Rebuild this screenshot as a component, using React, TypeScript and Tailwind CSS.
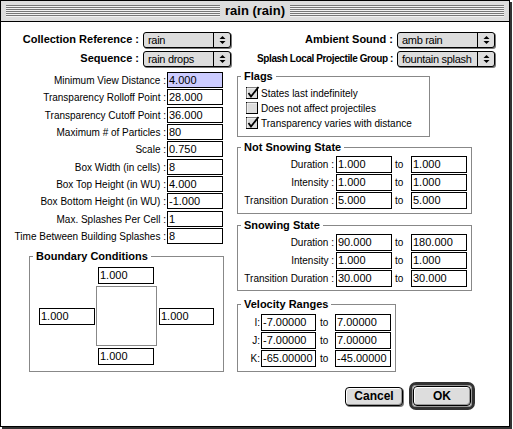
import React from "react";

type FieldProps = { value: string; w?: string; hl?: boolean };

function Field({ value, w = "w-[56px]", hl = false }: FieldProps) {
  return (
    <div
      className={`${w} h-[17px] shrink-0 border border-black ${hl ? "bg-[#ccccff]" : "bg-white"} pl-[1px] text-[11px] leading-[15px] whitespace-nowrap overflow-hidden`}
    >
      {value}
    </div>
  );
}

function SmallField({ value, hl = false }: FieldProps) {
  return (
    <div
      className={`w-[56px] h-[16px] shrink-0 border border-black ${hl ? "bg-[#ccccff]" : "bg-white"} pl-[1px] text-[11px] leading-[14px] whitespace-nowrap overflow-hidden`}
    >
      {value}
    </div>
  );
}

function Popup({ value, w }: { value: string; w: string }) {
  return (
    <div className={`${w} h-[16px] flex rounded-[3px] border border-black bg-[#dddddd] shadow-[1px_1px_0_#777777]`}>
      <div className="flex-1 pl-[4px] text-[11px] tracking-[-0.3px] leading-[14px] whitespace-nowrap overflow-hidden">
        {value}
      </div>
      <div className="w-[17px] border-l border-black flex items-center justify-center">
        <svg width="7" height="10" viewBox="0 0 7 10">
          <path d="M0.5 4 L3.5 1 L6.5 4 Z" fill="#000" />
          <path d="M0.5 6 L6.5 6 L3.5 9 Z" fill="#000" />
        </svg>
      </div>
    </div>
  );
}

function Group({ title, className, children }: { title: string; className: string; children: React.ReactNode }) {
  return (
    <div className={`${className} border border-[#888888] flex flex-col`}>
      <div className="-mt-[7px] ml-[3px] px-[3px] w-fit bg-white text-[11px] font-bold leading-[13px]">{title}</div>
      {children}
    </div>
  );
}

function Check({ checked, label }: { checked: boolean; label: string }) {
  return (
    <div className="h-[15px] flex items-center">
      <svg width="14" height="15" viewBox="0 0 14 15" className="shrink-0">
        <rect x="0.5" y="1.5" width="11" height="11" fill="#dddddd" stroke="#000" />
        <path d="M1 2 H11 M1 2 V12" stroke="#ffffff" />
        {checked && <path d="M2.5 7 L5 10.5 L12.5 1" fill="none" stroke="#000" strokeWidth="1.8" />}
      </svg>
      <span className="ml-[1px] text-[10px] leading-[15px]">{label}</span>
    </div>
  );
}

const leftRows: [string, string, string, boolean?][] = [
  ["Minimum View Distance", "4.000", "mt-0", true],
  ["Transparency Rolloff Point", "28.000", "mt-[1px]"],
  ["Transparency Cutoff Point", "36.000", "mt-[2px]"],
  ["Maximum # of Particles", "80", "mt-[1px]"],
  ["Scale", "0.750", "mt-[1px]"],
  ["Box Width (in cells)", "8", "mt-[2px]"],
  ["Box Top Height (in WU)", "4.000", "mt-[1px]"],
  ["Box Bottom Height (in WU)", "-1.000", "mt-[1px]"],
  ["Max. Splashes Per Cell", "1", "mt-[2px]"],
  ["Time Between Building Splashes", "8", "mt-[1px]"],
];

const notSnowing = [
  ["Duration", "1.000", "1.000"],
  ["Intensity", "1.000", "1.000"],
  ["Transition Duration", "5.000", "5.000"],
];

const snowing = [
  ["Duration", "90.000", "180.000"],
  ["Intensity", "1.000", "1.000"],
  ["Transition Duration", "30.000", "30.000"],
];

const velocity = [
  ["I", "-7.00000", "7.00000"],
  ["J", "-7.00000", "7.00000"],
  ["K", "-65.00000", "-45.00000"],
];

function StateRows({ rows }: { rows: string[][] }) {
  return (
    <div className="mt-[2px] flex flex-col gap-[1px]">
      {rows.map(([label, a, b]) => (
        <div key={label} className="flex items-center h-[17px]">
          <div className="w-[96px] text-right text-[10px] whitespace-nowrap">{label} :</div>
          <div className="ml-[2px]">
            <Field value={a} />
          </div>
          <div className="w-[19px] pl-[3px] text-[10px]">to</div>
          <Field value={b} />
        </div>
      ))}
    </div>
  );
}

export default function App() {
  return (
    <div className="w-[513px] h-[429px] bg-white text-black font-['Liberation_Sans',Arial,sans-serif]">
      <div className="w-[510px] h-[427px] border border-black shadow-[2px_2px_0_#333333] flex flex-col bg-white">
        {/* title bar */}
        <div className="h-[21px] shrink-0 border-b border-black bg-[#dddddd] flex items-center px-[5px]">
          <div className="flex-1 h-[12px] bg-[repeating-linear-gradient(to_bottom,#777777_0px,#777777_1px,#f2f2f2_1px,#f2f2f2_2px)]" />
          <div className="px-[5px] text-[13px] font-bold leading-[20px]">rain (rain)</div>
          <div className="flex-1 h-[12px] bg-[repeating-linear-gradient(to_bottom,#777777_0px,#777777_1px,#f2f2f2_1px,#f2f2f2_2px)]" />
        </div>

        <div className="flex flex-col pt-[9px]">
          {/* popups */}
          <div className="flex items-center h-[17px]">
            <div className="w-[138px] text-right text-[11px] font-bold whitespace-nowrap">Collection Reference :</div>
            <div className="ml-[4px]">
              <Popup value="rain" w="w-[88px]" />
            </div>
            <div className="w-[162px] text-right text-[11px] font-bold whitespace-nowrap">Ambient Sound :</div>
            <div className="ml-[4px]">
              <Popup value="amb rain" w="w-[98px]" />
            </div>
          </div>
          <div className="flex items-center h-[17px] mt-[2px]">
            <div className="w-[138px] text-right text-[11px] font-bold whitespace-nowrap">Sequence :</div>
            <div className="ml-[4px]">
              <Popup value="rain drops" w="w-[88px]" />
            </div>
            <div className="w-[162px] text-right text-[10px] tracking-[-0.4px] font-bold whitespace-nowrap">
              Splash Local Projectile Group :
            </div>
            <div className="ml-[4px]">
              <Popup value="fountain splash" w="w-[98px]" />
            </div>
          </div>

          <div className="flex mt-[5px]">
            {/* left column */}
            <div className="w-[236px] shrink-0 flex flex-col">
              {leftRows.map(([label, value, mt, hl]) => (
                <div key={label} className={`flex items-center h-[16px] ${mt}`}>
                  <div className="w-[165px] text-right text-[10px] whitespace-nowrap">{label} :</div>
                  <div className="ml-[1px]">
                    <SmallField value={value} hl={hl} />
                  </div>
                </div>
              ))}

              <Group title="Boundary Conditions" className="mt-[12px] ml-[28px] w-[195px] h-[116px]">
                <div className="mt-[4px] flex items-center">
                  <div className="pl-[9px]">
                    <Field value="1.000" />
                  </div>
                  <div className="ml-[1px] w-[61px] flex flex-col">
                    <div className="ml-[2px]">
                      <Field value="1.000" />
                    </div>
                    <div className="mt-[2px] h-[60px] border border-[#888888]" />
                    <div className="mt-[2px] ml-[2px]">
                      <Field value="1.000" />
                    </div>
                  </div>
                  <div className="ml-[2px]">
                    <Field value="1.000" w="w-[55px]" />
                  </div>
                </div>
              </Group>
            </div>

            {/* right column */}
            <div className="flex flex-col mt-[4px]">
              <Group title="Flags" className="w-[193px] h-[61px]">
                <div className="mt-[3px] pl-[8px] flex flex-col">
                  <Check checked label="States last indefinitely" />
                  <Check checked={false} label="Does not affect projectiles" />
                  <Check checked label="Transparency varies with distance" />
                </div>
              </Group>

              <Group title="Not Snowing State" className="mt-[10px] w-[235px] h-[67px]">
                <StateRows rows={notSnowing} />
              </Group>

              <Group title="Snowing State" className="mt-[11px] w-[235px] h-[66px]">
                <StateRows rows={snowing} />
              </Group>

              <Group title="Velocity Ranges" className="mt-[13px] w-[159px] h-[68px]">
                <div className="mt-[3px] flex flex-col gap-[1px]">
                  {velocity.map(([label, a, b]) => (
                    <div key={label} className="flex items-center h-[17px]">
                      <div className="w-[22px] text-right text-[10px]">{label}:</div>
                      <div className="ml-[1px]">
                        <Field value={a} w="w-[55px]" />
                      </div>
                      <div className="w-[19px] pl-[4px] text-[10px]">to</div>
                      <Field value={b} />
                    </div>
                  ))}
                </div>
              </Group>

              <div className="mt-[10px] pl-[108px] flex items-center">
                <div className="w-[58px] h-[19px] rounded-[4px] border border-black bg-[#dddddd] shadow-[inset_1px_1px_0_#ffffff,inset_-1px_-1px_0_#999999,1px_1px_0_#777777] flex items-center justify-center text-[12px] font-bold">
                  Cancel
                </div>
                <div className="ml-[6px] w-[66px] h-[28px] rounded-[7px] border-[3px] border-[#333333] shadow-[inset_0_0_0_1px_#999999] p-[1px] flex">
                  <div className="flex-1 rounded-[4px] border border-black bg-[#dddddd] shadow-[inset_1px_1px_0_#ffffff,inset_-1px_-1px_0_#999999] flex items-center justify-center text-[12px] font-bold">
                    OK
                  </div>
                </div>
              </div>
            </div>
          </div>
        </div>
      </div>
    </div>
  );
}
